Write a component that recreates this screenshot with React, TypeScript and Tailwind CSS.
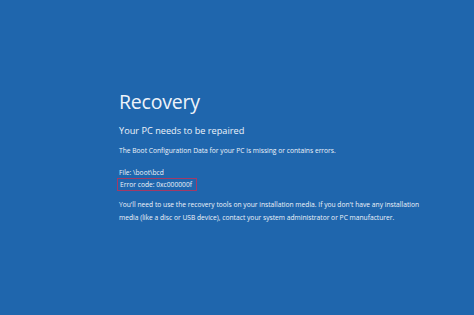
import React from "react";

export default function App() {
  return (
    <div className="w-[474px] h-[315px] bg-[#1f66ad] overflow-hidden" style={{ fontFamily: '"Open Sans", "Noto Sans", sans-serif' }}>
      <div className="pl-[119px] pt-[89px] flex flex-col text-[#eef3fa]">
        <div className="text-[19.5px] leading-[26px] tracking-[-0.2px]">Recovery</div>
        <div className="mt-[9px] text-[9.2px] leading-[14px]">Your PC needs to be repaired</div>
        <div className="mt-[8px] text-[6.7px] leading-[10px]">The Boot Configuration Data for your PC is missing or contains errors.</div>
        <div className="mt-[12px] text-[6.7px] leading-[10px]">File: \boot\bcd</div>
        <div className="mt-[0px] self-start -ml-[2px] pl-[2px] pr-[4px] border-[1.5px] border-[#a33a66] text-[6.7px] leading-[11px]">Error code: 0xc000000f</div>
        <div className="mt-[7px] text-[6.7px] leading-[13px]">
          <div>You'll need to use the recovery tools on your installation media. If you don't have any installation</div>
          <div>media (like a disc or USB device), contact your system administrator or PC manufacturer.</div>
        </div>
      </div>
    </div>
  );
}
